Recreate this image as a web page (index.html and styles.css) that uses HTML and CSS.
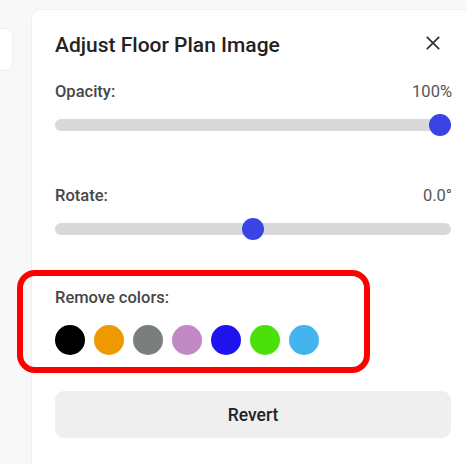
FILE: index.html
```html
<!DOCTYPE html>
<html>
<head>
<meta charset="utf-8">
<link rel="stylesheet" href="styles.css">
</head>
<body>
<div class="side">
  <div class="side-card"></div>
</div>
<div class="panel">
  <div class="head">
    <h1 class="title">Adjust Floor Plan Image</h1>
    <svg class="close" width="14" height="14" viewBox="0 0 14 14"><path d="M0.8 0.8 L13.2 13.2 M13.2 0.8 L0.8 13.2" stroke="#333" stroke-width="1.7" fill="none"/></svg>
  </div>
  <div class="field">
    <div class="row"><span class="label">Opacity:</span><span class="value">100%</span></div>
    <div class="track"><div class="thumb" style="--p: 1"></div></div>
  </div>
  <div class="field field-rotate">
    <div class="row"><span class="label">Rotate:</span><span class="value">0.0°</span></div>
    <div class="track"><div class="thumb" style="--p: 0.5"></div></div>
  </div>
  <div class="remove">
    <div class="row"><span class="label">Remove colors:</span></div>
    <div class="swatches">
      <span class="sw" style="background:#000000"></span>
      <span class="sw" style="background:#ee9900"></span>
      <span class="sw" style="background:#7a7f7e"></span>
      <span class="sw" style="background:#c088c4"></span>
      <span class="sw" style="background:#1f14f0"></span>
      <span class="sw" style="background:#4ce00a"></span>
      <span class="sw" style="background:#44b4ee"></span>
    </div>
  </div>
  <button class="revert">Revert</button>
</div>
</body>
</html>
```
FILE: styles.css
```css
html, body {
  margin: 0;
  padding: 0;
  height: 100%;
}
body {
  background: #f8f8f8;
  display: flex;
  font-family: Roboto, "Liberation Sans", sans-serif;
  overflow: hidden;
}
.side {
  width: 31px;
  flex: none;
}
.side-card {
  margin-top: 28px;
  margin-left: -20px;
  width: 31px;
  height: 41px;
  background: #fff;
  border: 1px solid #efefef;
  border-radius: 7px;
}
.panel {
  flex: 1;
  margin-top: 9px;
  background: #fff;
  border: 1px solid #f0f0f0;
  border-right: none;
  border-bottom: none;
  border-radius: 10px 0 0 0;
  padding: 22px 14px 0 23px;
}
.head {
  display: flex;
  align-items: flex-start;
  justify-content: space-between;
  height: 26px;
}
.title {
  margin: 0;
  font-size: 21px;
  line-height: 26px;
  font-weight: 500;
  color: #222;
}
.close {
  margin-top: 4px;
  margin-right: 12px;
  flex: none;
}
.field {
  margin-top: 24px;
}
.field-rotate {
  margin-top: 55px;
}
.row {
  display: flex;
  justify-content: space-between;
  align-items: center;
  height: 20px;
}
.label {
  font-size: 16.5px;
  line-height: 20px;
  font-weight: 500;
  color: #474747;
}
.value {
  font-size: 16.5px;
  line-height: 20px;
  color: #555;
}
.track {
  margin-top: 17px;
  height: 12px;
  border-radius: 6px;
  background: #d9d9dc;
  position: relative;
  margin-right: 1px;
}
.thumb {
  position: absolute;
  top: 50%;
  left: calc(11px + (100% - 22px) * var(--p));
  width: 22px;
  height: 22px;
  border-radius: 50%;
  background: #3a44e6;
  transform: translate(-50%, -50%);
}
.remove {
  box-sizing: border-box;
  margin-top: 35px;
  margin-left: -38px;
  width: 353px;
  border: 6px solid #ff0000;
  border-radius: 18px;
  padding: 12px 0 12px 32px;
}
.swatches {
  display: flex;
  gap: 9px;
  margin-top: 17px;
}
.sw {
  width: 30px;
  height: 30px;
  border-radius: 50%;
  flex: none;
}
.revert {
  display: block;
  margin-top: 18px;
  width: 396px;
  height: 47px;
  padding: 0;
  border: none;
  border-radius: 9px;
  background: #efefef;
  font-family: Roboto, "Liberation Sans", sans-serif;
  font-size: 17.5px;
  font-weight: 500;
  color: #222;
}
```
